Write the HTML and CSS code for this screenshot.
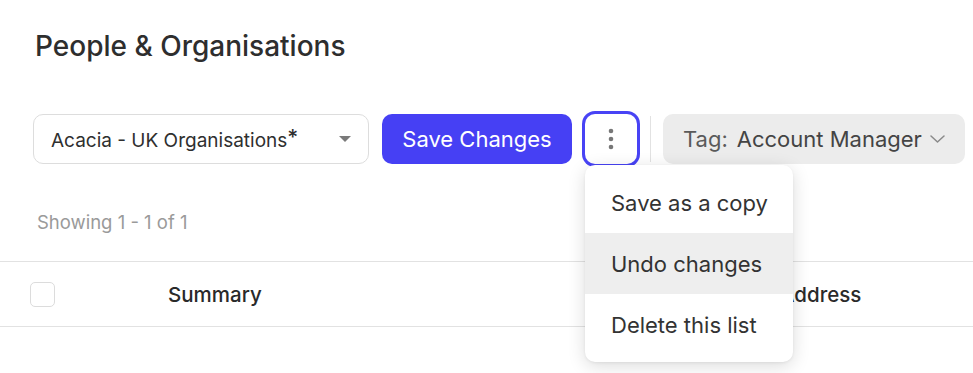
FILE: index.html
```html
<!DOCTYPE html>
<html lang="en">
<head>
<meta charset="utf-8">
<title>People &amp; Organisations</title>
<link rel="stylesheet" href="styles.css">
</head>
<body>
<div class="page">
  <h1 class="title">People &amp; Organisations</h1>

  <div class="toolbar">
    <div class="select">
      <span class="select-label">Acacia - UK Organisations<span class="star">*</span></span>
      <svg class="caret" width="12" height="6" viewBox="0 0 12 6"><path d="M0 0h12L6 6z" fill="#7a7a7a"/></svg>
    </div>
    <button class="btn-primary">Save Changes</button>
    <div class="kebab-wrap">
      <button class="kebab" aria-label="More">
        <svg width="6" height="22" viewBox="0 0 6 22"><circle cx="3" cy="3" r="2.3" fill="#777"/><circle cx="3" cy="11" r="2.3" fill="#777"/><circle cx="3" cy="19" r="2.3" fill="#777"/></svg>
      </button>
      <ul class="menu">
        <li class="menu-item">Save as a copy</li>
        <li class="menu-item is-hover">Undo changes</li>
        <li class="menu-item">Delete this list</li>
      </ul>
    </div>
    <span class="divider"></span>
    <div class="tag">
      <span class="tag-key">Tag:</span>
      <span class="tag-value">Account Manager</span>
      <svg class="chev" width="15" height="8" viewBox="0 0 15 8"><path d="M1 1l6.5 6L14 1" fill="none" stroke="#8a8a8a" stroke-width="1.5" stroke-linecap="round" stroke-linejoin="round"/></svg>
    </div>
  </div>

  <p class="count">Showing 1 - 1 of 1</p>
</div>

<div class="table">
  <div class="thead">
    <div class="cell-check"><span class="checkbox"></span></div>
    <div class="cell-summary">Summary</div>
    <div class="cell-address">Address</div>
  </div>
</div>
</body>
</html>
```

FILE: styles.css
```css
* { box-sizing: border-box; }
html, body { margin: 0; padding: 0; background: #fff; }
body {
  font-family: Inter, "Noto Sans", "Liberation Sans", sans-serif;
  color: #333;
  overflow: hidden;
  width: 973px;
  height: 373px;
}
.page { padding: 0 0 0 35px; }
.title {
  margin: 0;
  padding-top: 29px;
  font-size: 28px;
  line-height: 34px;
  font-weight: 500;
  color: #2e2e2e;
}
.toolbar {
  display: flex;
  align-items: center;
  gap: 13px;
  margin-top: 51px;
  margin-left: -2px;
  height: 50px;
}
.select {
  width: 336px;
  height: 50px;
  border: 1px solid #dddddd;
  border-radius: 10px;
  display: flex;
  align-items: center;
  justify-content: space-between;
  padding: 0 17px 0 17px;
  background: #fff;
}
.select-label { font-size: 19px; color: #2f2f2f; }
.star { position: relative; top: -2px; font-size: 21px; font-weight: 500; }
.btn-primary {
  width: 190px;
  height: 50px;
  border: 0;
  border-radius: 10px;
  background: #4640f4;
  color: #fff;
  font-family: inherit;
  font-size: 22px;
  font-weight: 400;
  padding: 0;
}
.kebab-wrap { position: relative; width: 52px; height: 50px; }
.kebab {
  width: 52px;
  height: 50px;
  border: 0;
  border-radius: 10px;
  background: #fff;
  box-shadow: 0 0 0 3px #4843f5;
  display: flex;
  align-items: center;
  justify-content: center;
  padding: 0;
}
.menu {
  position: absolute;
  top: 51px;
  left: 0;
  width: 208px;
  margin: 0;
  padding: 7px 0;
  list-style: none;
  background: #fff;
  border-radius: 10px;
  box-shadow: 0 4px 18px rgba(0,0,0,0.14), 0 1px 3px rgba(0,0,0,0.06);
  z-index: 10;
}
.menu-item {
  height: 61px;
  display: flex;
  align-items: center;
  padding-left: 26px;
  font-size: 22px;
  color: #333;
}
.menu-item.is-hover { background: #eeeeee; }
.divider { width: 1px; height: 46px; background: #e2e2e2; margin-right: -1px; }
.tag {
  width: 302px;
  height: 50px;
  background: #ececec;
  border-radius: 10px;
  display: flex;
  align-items: center;
  padding: 0 19px 0 20px;
  font-size: 22px;
  white-space: nowrap;
}
.tag-key { color: #5a5a5a; margin-right: 9px; }
.tag-value { color: #444; font-weight: 400; }
.chev { margin-left: 8px; }
.count {
  margin: 0;
  margin-top: 47px;
  font-size: 18.5px;
  line-height: 22px;
  color: #9a9a9a;
  padding-left: 2px;
}
.table { margin-top: 28px; }
.thead {
  display: flex;
  align-items: center;
  height: 66px;
  border-top: 1px solid #e2e2e2;
  border-bottom: 1px solid #e2e2e2;
}
.cell-check { width: 168px; padding-left: 30px; display: flex; align-items: center; }
.checkbox {
  width: 25px; height: 25px;
  border: 1px solid #dcdcdc;
  border-radius: 5px;
  display: block;
}
.cell-summary { width: 612px; font-size: 20.5px; font-weight: 500; color: #2a2a2a; }
.cell-address { font-size: 20.5px; font-weight: 500; color: #2a2a2a; }
```
